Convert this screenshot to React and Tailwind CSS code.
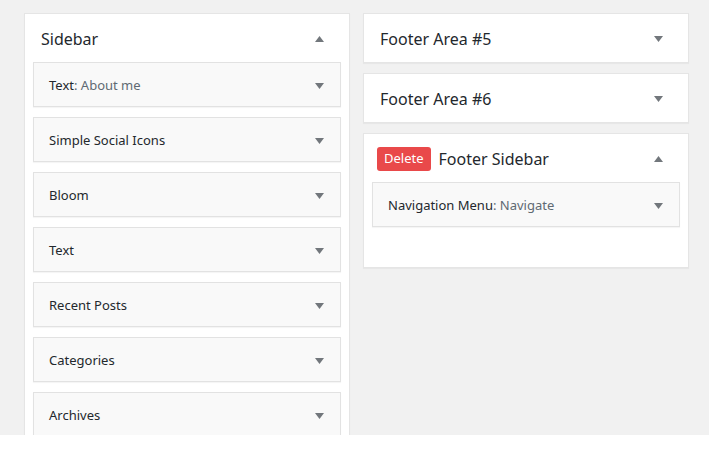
import React from "react";

const widgets = [
  { name: "Text", sub: "About me" },
  { name: "Simple Social Icons" },
  { name: "Bloom" },
  { name: "Text" },
  { name: "Recent Posts" },
  { name: "Categories" },
  { name: "Archives" },
];

function Arrow({ up }) {
  return (
    <svg width="9" height="6" viewBox="0 0 9 6" className="shrink-0">
      {up ? (
        <path d="M0 6 L4.5 0 L9 6 Z" fill="#72777c" />
      ) : (
        <path d="M0 0 L9 0 L4.5 6 Z" fill="#72777c" />
      )}
    </svg>
  );
}

function Widget({ name, sub }) {
  return (
    <div className="h-[45px] bg-[#f9f9f9] border border-[#e2e2e2] shadow-[0_1px_1px_rgba(0,0,0,0.04)] flex items-center justify-between pl-[15px] pr-[16px] pt-[2px]">
      <span className="text-[13px] text-[#23282d]">
        {name}
        {sub && <span className="text-[#606a73]">: {sub}</span>}
      </span>
      <Arrow />
    </div>
  );
}

function AreaHeader({ title, up, del }) {
  return (
    <div className="h-[48px] flex items-center justify-between pl-[16px] pr-[25px] pt-[1px]">
      <div className="flex items-center gap-[8px]">
        {del && (
          <span className="h-[24px] px-[7px] rounded-[3px] bg-[#e9494a] text-white text-[13px] flex items-center -ml-[3px]">
            Delete
          </span>
        )}
        <h2 className="text-[16px] text-[#23282d]">{title}</h2>
      </div>
      <Arrow up={up} />
    </div>
  );
}

export default function App() {
  return (
    <div className="bg-white min-h-[452px] font-['Noto_Sans','Open_Sans',sans-serif]">
      <div className="h-[435px] overflow-hidden bg-[#f1f1f1] pt-[13px] pl-[24px] flex items-start gap-[13px]">
        <div className="w-[326px] bg-white border border-[#e5e5e5] shadow-[0_1px_1px_rgba(0,0,0,0.04)] shrink-0">
          <AreaHeader title="Sidebar" up />
          <div className="px-[8px] flex flex-col gap-[10px]">
            {widgets.map((w, i) => (
              <Widget key={i} {...w} />
            ))}
          </div>
        </div>

        <div className="w-[326px] flex flex-col gap-[10px] shrink-0">
          <div className="bg-white border border-[#e5e5e5] shadow-[0_1px_1px_rgba(0,0,0,0.04)]">
            <AreaHeader title="Footer Area #5" />
          </div>
          <div className="bg-white border border-[#e5e5e5] shadow-[0_1px_1px_rgba(0,0,0,0.04)]">
            <AreaHeader title="Footer Area #6" />
          </div>
          <div className="bg-white border border-[#e5e5e5] shadow-[0_1px_1px_rgba(0,0,0,0.04)] pb-[40px]">
            <AreaHeader title="Footer Sidebar" up del />
            <div className="px-[8px]">
              <Widget name="Navigation Menu" sub="Navigate" />
            </div>
          </div>
        </div>
      </div>
    </div>
  );
}
